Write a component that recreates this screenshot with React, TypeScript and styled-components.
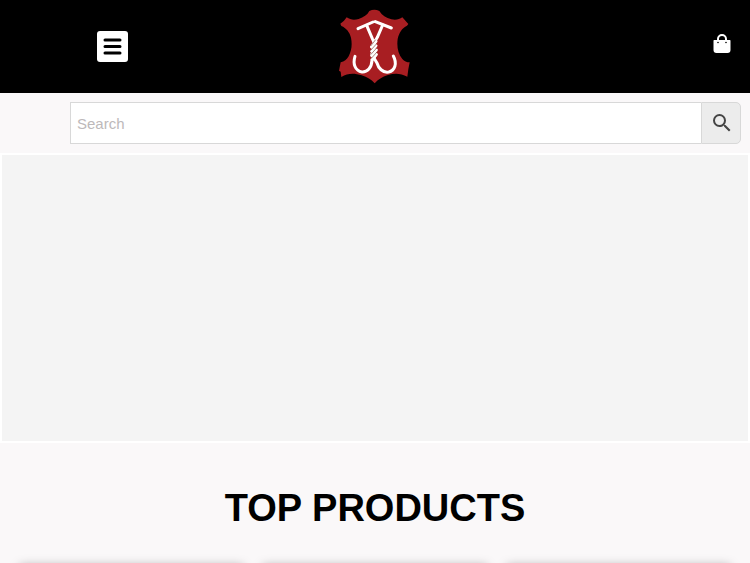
import React from "react";
import styled, { createGlobalStyle } from "styled-components";

const GlobalStyle = createGlobalStyle`
  *, *::before, *::after { box-sizing: border-box; }
  body {
    margin: 0;
    background: #faf8f9;
    font-family: "Liberation Sans", Arial, Helvetica, sans-serif;
    color: #000;
  }
`;

const Page = styled.div`
  display: flex;
  flex-direction: column;
  height: 100vh;
  overflow: hidden;
`;

const Header = styled.header`
  display: grid;
  grid-template-columns: 3fr 4fr 3fr;
  align-items: center;
  flex-shrink: 0;
  padding: 9px 0;
  background: #000;
`;

const HeaderCell = styled.div<{ $align?: string }>`
  display: flex;
  justify-content: ${({ $align }) => $align ?? "center"};
  padding: ${({ $align }) => ($align ? "0 19px 6px" : "0")};
`;

const MenuButton = styled.button`
  display: flex;
  align-items: center;
  justify-content: center;
  width: 31px;
  height: 31px;
  padding: 0;
  border: 0;
  border-radius: 3px;
  background: #fff;
  cursor: pointer;
`;

const IconLink = styled.a`
  display: block;
  line-height: 0;
`;

const SearchBar = styled.section`
  flex-shrink: 0;
  padding: 9px 9px 9px 70px;
`;

const SearchForm = styled.form`
  display: flex;
  height: 42px;
`;

const SearchInput = styled.input`
  flex: 1;
  min-width: 0;
  padding: 0 6px;
  border: 1px solid #d8d8d8;
  border-right: 0;
  border-radius: 0;
  background: #fff;
  font: 15px "Liberation Sans", Arial, sans-serif;
  outline: none;
  &::placeholder { color: #bdb9ba; opacity: 1; }
`;

const SearchButton = styled.button`
  display: flex;
  align-items: center;
  justify-content: center;
  width: 40px;
  padding: 0 0 0 2px;
  border: 1px solid #d8d8d8;
  border-radius: 0 5px 5px 0;
  background: #ececec;
  cursor: pointer;
`;

const Banner = styled.section`
  flex-shrink: 0;
  height: 290px;
  border: 2px solid #fff;
  background: #f4f4f4;
`;

const Products = styled.section`
  flex-shrink: 0;
  padding: 43px 20px;
`;

const Title = styled.h2`
  margin: 0 0 36px;
  font-size: 38px;
  line-height: 44px;
  font-weight: 700;
  text-align: center;
`;

const ProductGrid = styled.div`
  display: grid;
  grid-template-columns: repeat(3, 1fr);
  gap: 20px;
`;

const ProductCard = styled.article`
  height: 300px;
  background: #fff;
  box-shadow: 0 0 10px rgba(0, 0, 0, 0.35);
`;

const Logo = () => (
  <svg width="72" height="75" viewBox="27 27 216 225" aria-hidden="true">
    <path
      fill="#a81e22"
      d="M118 33Q133 26 148 33C156 46 168 54 184 58C198 61 208 58 217 52L235 72L231 77C216 84 207 98 203 117C200 140 204 162 217 177C223 184 230 187 239 187L235 208L232 230C212 219 193 219 174 225C156 231 145 238 134 250C123 238 112 231 95 226C74 219 54 218 34 231L32 215L27 212L32 187C43 185 50 179 56 169C65 152 67 133 63 113C59 97 49 84 34 78L31 71L42 62L50 52C61 60 73 61 86 57C101 52 112 45 118 33Z"
    />
    <g fill="none" stroke="#fff" strokeWidth="9" strokeLinecap="round" strokeLinejoin="round">
      <path d="M84 86L129 66M136 65L184 84" />
      <path d="M110 76L127 116L132 127M158 75L142 112L125 141" />
      <path d="M75 169C68 191 75 213 96 216C112 217 125 203 126 181L138 164" />
      <path d="M190 168C202 190 195 212 176 216C158 219 145 204 141 189L125 163" />
      <path d="M125 141L138 124M125 154L138 137M125 167L139 150M126 179L139 163" />
    </g>
    <path
      stroke="#7b4d43"
      strokeWidth="2"
      fill="none"
      d="M122 138L137 119M122 151L140 131M122 164L140 144M123 176L141 156"
    />
  </svg>
);

const MenuIcon = () => (
  <svg width="19" height="17" viewBox="0 0 19 17" aria-hidden="true">
    <path d="M2 2h15M2 8.5h15M2 15h15" stroke="#000" strokeWidth="3" strokeLinecap="round" />
  </svg>
);

const BagIcon = () => (
  <svg width="18" height="19" viewBox="0 0 18 19" aria-hidden="true">
    <path
      fill="#fff"
      d="M1 6H4V5A5 5 0 0 1 14 5V6H17Q17.5 6 17.5 7V16Q17.5 19 14.5 19H3.5Q.5 19 .5 16V7Q.5 6 1 6ZM6 6H12V5A3 3 0 0 0 6 5Z"
    />
    <circle cx="5" cy="8.5" r=".8" />
    <circle cx="13" cy="8.5" r=".8" />
  </svg>
);

const SearchIcon = () => (
  <svg width="24" height="24" viewBox="0 0 24 24" aria-hidden="true">
    <path
      fill="#444"
      d="M15.5 14h-.79l-.28-.27A6.47 6.47 0 0 0 16 9.5 6.5 6.5 0 1 0 9.5 16c1.61 0 3.09-.59 4.23-1.57l.27.28v.79l5 4.99L20.49 19l-4.99-5zm-6 0a4.5 4.5 0 1 1 0-9 4.5 4.5 0 0 1 0 9z"
    />
  </svg>
);

const products = [1, 2, 3];

export default function App() {
  return (
    <Page>
      <GlobalStyle />
      <Header>
        <HeaderCell>
          <MenuButton type="button" aria-label="Menu">
            <MenuIcon />
          </MenuButton>
        </HeaderCell>
        <HeaderCell>
          <IconLink href="#" aria-label="Home">
            <Logo />
          </IconLink>
        </HeaderCell>
        <HeaderCell $align="flex-end">
          <IconLink href="#" aria-label="Cart">
            <BagIcon />
          </IconLink>
        </HeaderCell>
      </Header>
      <SearchBar>
        <SearchForm role="search" onSubmit={(event) => event.preventDefault()}>
          <SearchInput type="text" placeholder="Search" aria-label="Search" />
          <SearchButton type="submit" aria-label="Submit search">
            <SearchIcon />
          </SearchButton>
        </SearchForm>
      </SearchBar>
      <Banner />
      <Products>
        <Title>TOP PRODUCTS</Title>
        <ProductGrid>
          {products.map((id) => (
            <ProductCard key={id} />
          ))}
        </ProductGrid>
      </Products>
    </Page>
  );
}
